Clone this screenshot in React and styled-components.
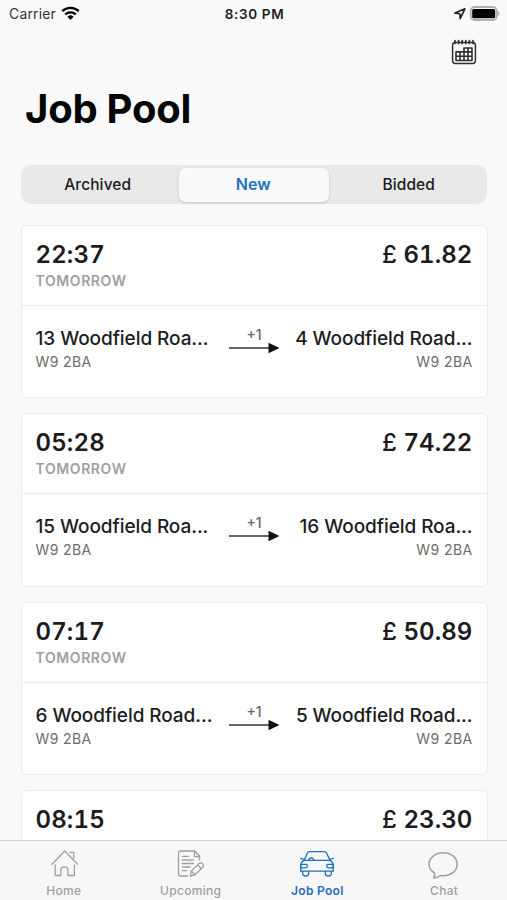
import React, { useState } from "react"
import styled, { createGlobalStyle, ThemeProvider } from "styled-components"

const theme = {
  body: "#f9f9f9",
  text: "#1c1c1e",
  primary: "#1f6fbd",
  muted: "#a0a0a0",
  border: "#ebebeb",
}

const GlobalStyle = createGlobalStyle`
  * {
    box-sizing: border-box;
  }

  body {
    margin: 0;
    background: ${({ theme }) => theme.body};
    color: ${({ theme }) => theme.text};
    font-family: Inter, "Liberation Sans", sans-serif;
    white-space: nowrap;
  }
`

const Screen = styled.div`
  display: flex;
  flex-direction: column;
  width: 507px;
  height: 900px;
  overflow: hidden;
`

const StatusBar = styled.div`
  display: grid;
  grid-template-columns: 1fr auto 1fr;
  align-items: center;
  height: 27px;
  padding: 0 7px 0 9px;
`

const StatusSide = styled.div`
  display: flex;
  align-items: center;
  justify-content: ${({ $end }) => ($end ? "flex-end" : "flex-start")};
  gap: ${({ $end }) => ($end ? "3px" : "5px")};
`

const Carrier = styled.span`
  font-size: 14px;
  letter-spacing: 0.15px;
  color: #333;
`

const Clock = styled.span`
  font-size: 13.5px;
  font-weight: 600;
  letter-spacing: 0.65px;
`

const Toolbar = styled.div`
  display: flex;
  justify-content: flex-end;
  height: 58px;
  padding: 12px 30px 0 0;
`

const IconButton = styled.button`
  width: 26px;
  height: 27px;
  padding: 0;
  border: none;
  background: none;
`

const Title = styled.h1`
  margin: 0 0 32px 25px;
  color: #050505;
  font-size: 40px;
  font-weight: 700;
  line-height: 48px;
  letter-spacing: -0.25px;
`

const Segments = styled.div`
  display: grid;
  grid-template-columns: repeat(3, 1fr);
  flex: none;
  height: 38.5px;
  margin: 0 20px 21px 20.5px;
  padding: 2.5px 0;
  border-radius: 10px;
  background: #e9e9e9;
`

const Segment = styled.button`
  margin: 0 ${({ $active }) => ($active ? "2.5px" : "0")};
  padding: 0 1px ${({ $active }) => ($active ? "2px" : "0")} 0;
  border: none;
  border-radius: 7px;
  background: ${({ $active }) => ($active ? "#f9fafb" : "transparent")};
  box-shadow: ${({ $active }) => ($active ? "0 1px 3px rgba(0, 0, 0, 0.16)" : "none")};
  color: ${({ $active, theme }) => ($active ? theme.primary : theme.text)};
  font-family: inherit;
  font-size: ${({ $active }) => ($active ? "16px" : "15.5px")};
  font-weight: ${({ $active }) => ($active ? 600 : 500)};
  line-height: 32px;
  letter-spacing: 0.1px;
`

const JobList = styled.div`
  display: flex;
  flex-direction: column;
  flex: 1;
  min-height: 0;
  gap: 15px;
  margin: 0 19.5px 0 20.5px;
  overflow: hidden;
`

const Card = styled.div`
  flex: none;
  height: 173.5px;
  border: 1.5px solid ${({ theme }) => theme.border};
  border-radius: 6px;
  background: #fff;
`

const CardHeader = styled.div`
  display: flex;
  justify-content: space-between;
  height: 80px;
  padding: 14px 14px 0;
  border-bottom: 1px solid ${({ theme }) => theme.border};
`

const Figure = styled.div`
  font-size: 24px;
  font-weight: 600;
  font-variant-numeric: tabular-nums;
  line-height: 30px;
  letter-spacing: ${({ $price }) => ($price ? "0.1px" : "0.15px")};
`

const Currency = styled.span`
  font-weight: 500;
`

const Day = styled.div`
  margin-top: 2px;
  color: ${({ theme }) => theme.muted};
  font-size: 14px;
  font-weight: 600;
  line-height: 18px;
  letter-spacing: 0.6px;
`

const Route = styled.div`
  display: flex;
  justify-content: space-between;
  padding: 21px 14px 0;
`

const Place = styled.div`
  width: 178px;
`

const Street = styled.div`
  display: flex;
  justify-content: ${({ $end }) => ($end ? "flex-end" : "flex-start")};
  font-size: 19px;
  font-weight: 500;
  line-height: 24px;
  letter-spacing: -0.07px;
`

const Postcode = styled.div`
  margin-top: 2px;
  color: #6c6c6c;
  font-size: 14px;
  line-height: 18px;
  letter-spacing: 0.4px;
  text-align: ${({ $end }) => ($end ? "right" : "left")};
`

const Stops = styled.div`
  display: flex;
  flex-direction: column;
  align-items: center;
  color: #666;
  font-size: 14px;
  font-weight: 500;
  line-height: 15px;
`

const TabBar = styled.nav`
  display: grid;
  grid-template-columns: repeat(4, 1fr);
  flex: none;
  height: 60px;
  border-top: 1px solid #d6d6d6;
  background: #f7f7f7;
`

const Tab = styled.button`
  display: flex;
  flex-direction: column;
  align-items: center;
  padding: 7px 0 0 1px;
  border: none;
  background: none;
  color: ${({ $active, theme }) => ($active ? theme.primary : theme.muted)};
  font-family: inherit;
  font-size: 12px;
  font-weight: ${({ $active }) => ($active ? 600 : 500)};
  line-height: 16px;
  letter-spacing: 0.3px;

  svg {
    margin-bottom: 3px;
  }
`

const strokeProps = {
  fill: "none",
  stroke: "currentColor",
  strokeLinecap: "round",
  strokeLinejoin: "round",
}

const WifiIcon = () => (
  <svg width="19" height="15" viewBox="0 0 19 15" fill="none" stroke="#000" strokeWidth="2.3">
    <path d="M1.2 5.2a12 12 0 0 1 16.6 0M4.2 8.5a7.6 7.6 0 0 1 10.6 0" />
    <path d="M6.4 10.8a4.5 4.5 0 0 1 6.2 0L9.5 13.9z" fill="#000" stroke="none" />
  </svg>
)

const LocationIcon = () => (
  <svg width="13" height="13" viewBox="0 0 13 13" fill="none" stroke="#222" strokeWidth="1.6" strokeLinejoin="round">
    <path d="M11.9 1.8 1.9 6.1l5 .6.3 4.9z" />
  </svg>
)

const BatteryIcon = () => (
  <svg width="31" height="15" viewBox="0 0 31 15">
    <rect x="1.8" y="1" width="26" height="13" rx="4" fill="#f9f9f9" stroke="#b0b0b0" strokeWidth="1.8" />
    <rect x="3.2" y="2.9" width="23" height="9.4" rx="1.6" fill="#000" />
    <path d="M29 5.3v4.4c2-.7 2-3.7 0-4.4z" fill="#aaa" />
  </svg>
)

const CalendarIcon = () => (
  <svg width="26" height="27" viewBox="0 0 26 27" {...strokeProps} stroke="#303030">
    <rect x="1.6" y="3.4" width="22.8" height="21" rx="2.6" strokeWidth="1.5" />
    <path d="M4 1.5v3M7.6 1.5v3M11.2 1.5v3M14.8 1.5v3M18.4 1.5v3M22 1.5v3" strokeWidth="1.7" />
    <path
      d="M5 12.9h8V9h8v12.5H5zM5 17.2h16M13 12.9h8M9 12.9v8.6M13 12.9v8.6M17 9v12.5"
      strokeWidth="1.6"
    />
  </svg>
)

const ArrowIcon = () => (
  <svg width="51" height="12" viewBox="0 0 51 12">
    <path d="M0 6h41" stroke="#333" strokeWidth="1.5" />
    <path d="M39.5.7 50.5 6l-11 5.3z" fill="#111" />
  </svg>
)

const HomeIcon = () => (
  <svg width="28" height="32" viewBox="-1 0 28 32" {...strokeProps} strokeWidth="1.3">
    <path d="M1 16.2 13.8 3l12.8 13.2M18.8 4.4h4v5.8" />
    <path d="M4.2 17v10.5h5.7v-5.2c0-4.6 7-4.6 7 0v5.2h6.5V17" />
  </svg>
)

const UpcomingIcon = () => (
  <svg width="28" height="32" viewBox="0 0 28 32" {...strokeProps} strokeWidth="1.3">
    <path d="M10.5 28H3.2a1.7 1.7 0 0 1-1.7-1.7V4.7A1.7 1.7 0 0 1 3.2 3h14.6l4.7 5v4M17.4 3v5.5h5.1" />
    <path d="M5.2 8.3h6.3M5.2 12h11.3M5.2 15.5h11.3M5.2 19h8M5.2 22.6h4.4" />
    <path d="m14.2 23 7.8-7.4c2.2-2 5.9 1.1 3.7 3.7l-7.6 7.5-4.8 1.2zM20.6 17l3.7 3.8M14.2 23l3.9 3.8" />
  </svg>
)

const CarIcon = () => (
  <svg width="36" height="32" viewBox="0 0 36 32" {...strokeProps} strokeWidth="1.3">
    <path d="M5 12.4 8.3 5.3Q9.1 3.6 10.8 3.6h14.4q1.7 0 2.5 1.7l3.3 7.1M5 12.4h26M1.6 10.3l3.9 1.2M34.4 10.3l-3.9 1.2" />
    <path d="M5 12.4q-3.3 1.7-3.3 5.6v5.2h32.6V18q0-3.9-3.3-5.6" />
    <path d="M1.9 16.4h5.3q1.2 0 1.1 1.6 0 1.8-1.8 1.8H1.9zM34.1 16.4h-5.3q-1.2 0-1.1 1.6 0 1.8 1.8 1.8h4.6z" />
    <path d="M3.7 23.3v2.5c0 2.9 6 2.9 6 0v-2.5M26.3 23.3v2.5c0 2.9 6 2.9 6 0v-2.5M9.6 12c1.6-3 4.4-2.5 5.3 0M13 9.6l2.1 2.4" />
  </svg>
)

const ChatIcon = () => (
  <svg width="32" height="32" viewBox="0.8 0 32 32" {...strokeProps} strokeWidth="1.5">
    <path d="M7.2 25C3.7 22.8 1.8 20 1.8 16.3 1.8 9.8 8.1 4.8 16.1 4.8s13.9 5 13.9 11.5-6 11.4-13.9 11.4c-1 0-2-.1-2.9-.2-2 1.5-4.3 2.4-6.7 2.4 1.3-1.6 1.6-2.9.7-4.9z" />
  </svg>
)

const segments = ["Archived", "New", "Bidded"]

const jobs = [
  { time: "22:37", price: "61.82", from: "13 Woodfield Roa...", to: "4 Woodfield Road..." },
  { time: "05:28", price: "74.22", from: "15 Woodfield Roa...", to: "16 Woodfield Roa..." },
  { time: "07:17", price: "50.89", from: "6 Woodfield Road...", to: "5 Woodfield Road..." },
  { time: "08:15", price: "23.30" },
]

const tabs = [
  { label: "Home", Icon: HomeIcon },
  { label: "Upcoming", Icon: UpcomingIcon },
  { label: "Job Pool", Icon: CarIcon },
  { label: "Chat", Icon: ChatIcon },
]

const JobCard = ({ job }) => (
  <Card>
    <CardHeader>
      <div>
        <Figure>{job.time}</Figure>
        {job.from && <Day>TOMORROW</Day>}
      </div>
      <Figure $price>
        <Currency>£</Currency> {job.price}
      </Figure>
    </CardHeader>
    {job.from && (
      <Route>
        <Place>
          <Street>{job.from}</Street>
          <Postcode>W9 2BA</Postcode>
        </Place>
        <Stops>
          <span>+1</span>
          <ArrowIcon />
        </Stops>
        <Place>
          <Street $end>{job.to}</Street>
          <Postcode $end>W9 2BA</Postcode>
        </Place>
      </Route>
    )}
  </Card>
)

const App = () => {
  const [segment, setSegment] = useState("New")
  const [tab, setTab] = useState("Job Pool")

  return (
    <ThemeProvider theme={theme}>
      <GlobalStyle />
      <Screen>
        <StatusBar>
          <StatusSide>
            <Carrier>Carrier</Carrier>
            <WifiIcon />
          </StatusSide>
          <Clock>8:30 PM</Clock>
          <StatusSide $end>
            <LocationIcon />
            <BatteryIcon />
          </StatusSide>
        </StatusBar>
        <Toolbar>
          <IconButton aria-label="Calendar">
            <CalendarIcon />
          </IconButton>
        </Toolbar>
        <Title>Job Pool</Title>
        <Segments>
          {segments.map((name) => (
            <Segment key={name} $active={name === segment} onClick={() => setSegment(name)}>
              {name}
            </Segment>
          ))}
        </Segments>
        <JobList>
          {jobs.map((job) => (
            <JobCard key={job.time} job={job} />
          ))}
        </JobList>
        <TabBar>
          {tabs.map(({ label, Icon }) => (
            <Tab key={label} $active={label === tab} onClick={() => setTab(label)}>
              <Icon />
              {label}
            </Tab>
          ))}
        </TabBar>
      </Screen>
    </ThemeProvider>
  )
}

export default App
